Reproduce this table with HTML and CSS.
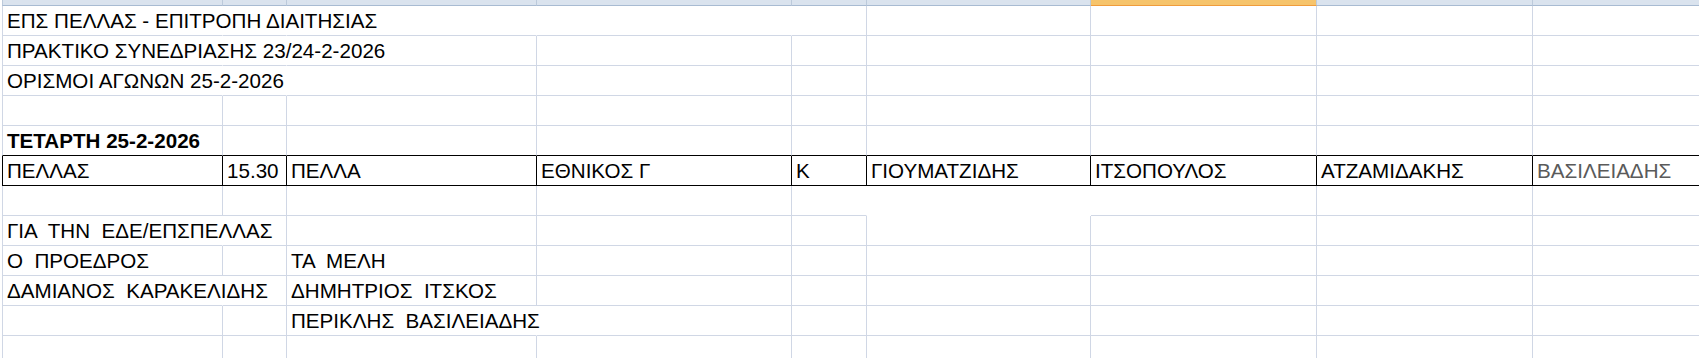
FILE: index.html
```html
<!DOCTYPE html>
<html>
	<head>
		<meta charset="utf-8">
		<title>ΟΡΙΣΜΟΙ ΑΓΩΝΩΝ 25-2-2026</title>
		<link rel="stylesheet" href="styles.css">
	</head>
	<body>
		<div class="sheet">
			<!-- column headers, only their lower edge is in view -->
			<div class="row heads">
				<div class="h"></div><div class="h"></div><div class="h"></div><div class="h"></div><div class="h"></div>
				<div class="h"></div><div class="h sel"></div><div class="h"></div><div class="h"></div>
			</div>

			<div class="row">
				<div class="c nr">ΕΠΣ ΠΕΛΛΑΣ - ΕΠΙΤΡΟΠΗ ΔΙΑΙΤΗΣΙΑΣ</div><div class="c nr"></div><div class="c nr"></div><div class="c nr"></div>
				<div class="c"></div><div class="c"></div><div class="c"></div><div class="c"></div><div class="c"></div>
			</div>
			<div class="row">
				<div class="c nr">ΠΡΑΚΤΙΚΟ ΣΥΝΕΔΡΙΑΣΗΣ 23/24-2-2026</div><div class="c nr"></div><div class="c"></div><div class="c"></div>
				<div class="c"></div><div class="c"></div><div class="c"></div><div class="c"></div><div class="c"></div>
			</div>
			<div class="row">
				<div class="c nr">ΟΡΙΣΜΟΙ ΑΓΩΝΩΝ 25-2-2026</div><div class="c nr"></div><div class="c"></div><div class="c"></div>
				<div class="c"></div><div class="c"></div><div class="c"></div><div class="c"></div><div class="c"></div>
			</div>
			<div class="row">
				<div class="c"></div><div class="c"></div><div class="c"></div><div class="c"></div><div class="c"></div>
				<div class="c"></div><div class="c"></div><div class="c"></div><div class="c"></div>
			</div>
			<div class="row day">
				<div class="c bold">ΤΕΤΑΡΤΗ 25-2-2026</div><div class="c"></div><div class="c"></div><div class="c"></div><div class="c"></div>
				<div class="c"></div><div class="c"></div><div class="c"></div><div class="c"></div>
			</div>
			<!-- match line, boxed in black -->
			<div class="row match">
				<div class="c">ΠΕΛΛΑΣ</div>
				<div class="c">15.30</div>
				<div class="c">ΠΕΛΛΑ</div>
				<div class="c">ΕΘΝΙΚΟΣ Γ</div>
				<div class="c">Κ</div>
				<div class="c">ΓΙΟΥΜΑΤΖΙΔΗΣ</div>
				<div class="c">ΙΤΣΟΠΟΥΛΟΣ</div>
				<div class="c">ΑΤΖΑΜΙΔΑΚΗΣ</div>
				<div class="c grey">ΒΑΣΙΛΕΙΑΔΗΣ</div>
			</div>
			<div class="row">
				<div class="c"></div><div class="c"></div><div class="c"></div><div class="c"></div><div class="c nr"></div>
				<div class="c nr nb"></div><div class="c"></div><div class="c"></div><div class="c"></div>
			</div>
			<div class="row">
				<div class="c nr">ΓΙΑ  ΤΗΝ  ΕΔΕ/ΕΠΣΠΕΛΛΑΣ</div><div class="c"></div><div class="c"></div><div class="c"></div><div class="c"></div>
				<div class="c"></div><div class="c"></div><div class="c"></div><div class="c"></div>
			</div>
			<div class="row">
				<div class="c">Ο  ΠΡΟΕΔΡΟΣ</div><div class="c"></div><div class="c">ΤΑ  ΜΕΛΗ</div><div class="c"></div><div class="c"></div>
				<div class="c"></div><div class="c"></div><div class="c"></div><div class="c"></div>
			</div>
			<div class="row">
				<div class="c nr">ΔΑΜΙΑΝΟΣ  ΚΑΡΑΚΕΛΙΔΗΣ</div><div class="c"></div><div class="c">ΔΗΜΗΤΡΙΟΣ  ΙΤΣΚΟΣ</div><div class="c"></div><div class="c"></div>
				<div class="c"></div><div class="c"></div><div class="c"></div><div class="c"></div>
			</div>
			<div class="row">
				<div class="c"></div><div class="c"></div><div class="c nr">ΠΕΡΙΚΛΗΣ  ΒΑΣΙΛΕΙΑΔΗΣ</div><div class="c"></div><div class="c"></div>
				<div class="c"></div><div class="c"></div><div class="c"></div><div class="c"></div>
			</div>
			<div class="row">
				<div class="c"></div><div class="c"></div><div class="c"></div><div class="c"></div><div class="c"></div>
				<div class="c"></div><div class="c"></div><div class="c"></div><div class="c"></div>
			</div>
		</div>
	</body>
</html>
```
FILE: styles.css
```css
body {
	margin: 0;
	background: #ffffff;
	overflow: hidden;
}
.sheet {
	box-sizing: border-box;
	width: 1699px;
	padding-left: 2px;
	font-family: "Liberation Sans", Arial, sans-serif;
	font-size: 20.6px;
	color: #000000;
}
.row {
	display: grid;
	grid-template-columns: 221px 64px 250px 255px 75px 224px 226px 216px 1fr;
	height: 30px;
}
.heads {
	height: 6px;
}
.h {
	background: #dae3ee;
	border-right: 1px solid #bccadb;
	border-bottom: 1px solid #a8bbd2;
}
.h:first-child {
	border-left: 1px solid #bccadb;
}
.h:last-child {
	border-right: none;
}
.h.sel {
	background: #f6c46c;
	border-bottom-color: #f09c3c;
}
.c {
	display: flex;
	align-items: flex-end;
	min-width: 0;
	padding: 0 0 2px 4px;
	border-right: 1px solid #d0d7e5;
	border-bottom: 1px solid #d0d7e5;
	line-height: 24px;
	white-space: pre;
	overflow: visible;
}
.c:first-child {
	border-left: 1px solid #d0d7e5;
}
.c:last-child {
	border-right: none;
}
.nr {
	border-right-color: transparent;
}
.nb {
	border-bottom-color: transparent;
}
.bold {
	font-weight: bold;
}
.grey {
	color: #5a5a5a;
}
.day .c {
	border-bottom-color: #000000;
}
.match .c {
	border-right-color: #000000;
	border-bottom-color: #000000;
}
.match .c:first-child {
	border-left-color: #000000;
}
```
